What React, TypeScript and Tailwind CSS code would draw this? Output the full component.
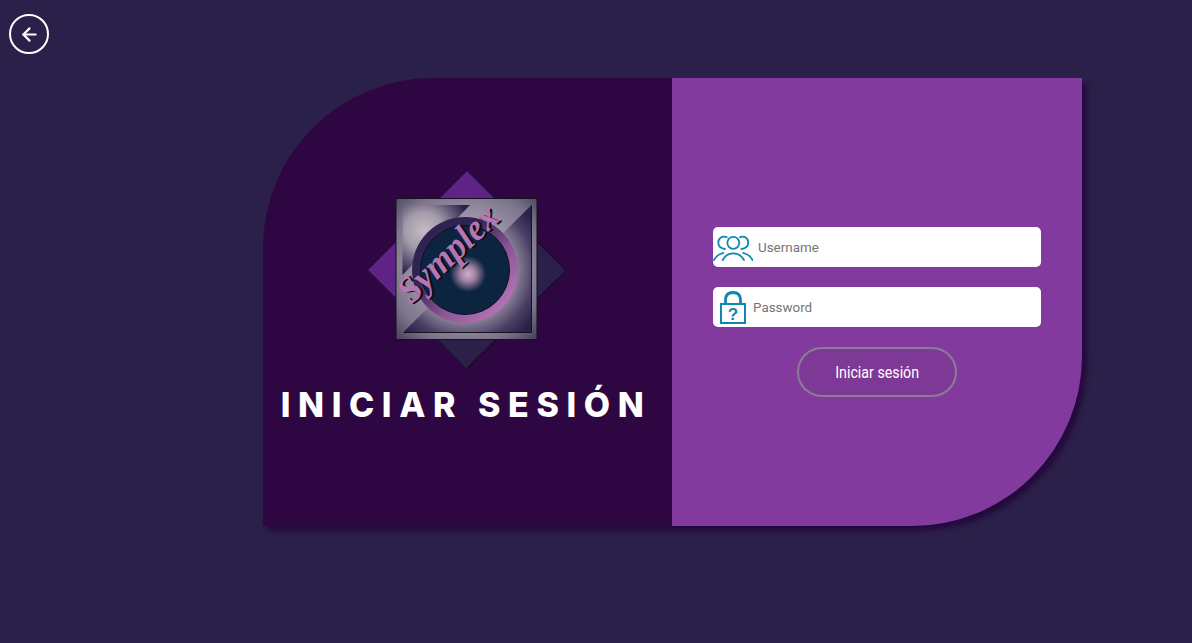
import { ArrowLeft } from 'lucide-react'

function Logo() {
  return (
    <svg width="199" height="199" viewBox="0 0 199 199" className="block overflow-visible">
      <defs>
        <radialGradient id="plate" gradientUnits="userSpaceOnUse" cx="98" cy="95" r="98">
          <stop offset="0.5" stopColor="#9c94a8" />
          <stop offset="0.8" stopColor="#7b7389" />
          <stop offset="1" stopColor="#4f4760" />
        </radialGradient>
        <radialGradient id="glowTop" gradientUnits="userSpaceOnUse" cx="56" cy="60" r="46">
          <stop offset="0" stopColor="#c4bcc4" />
          <stop offset="0.4" stopColor="#a59cac" />
          <stop offset="1" stopColor="#2b2049" />
        </radialGradient>
        <radialGradient id="glowBottom" gradientUnits="userSpaceOnUse" cx="97" cy="99" r="84">
          <stop offset="0.62" stopColor="#8a7f96" />
          <stop offset="0.82" stopColor="#4a4065" />
          <stop offset="1" stopColor="#2b2049" />
        </radialGradient>
        <linearGradient id="ring" x1="0.15" y1="0.15" x2="0.85" y2="0.85">
          <stop offset="0.25" stopColor="#2f2350" />
          <stop offset="0.65" stopColor="#8d5596" />
          <stop offset="1" stopColor="#b172b2" />
        </linearGradient>
        <radialGradient id="spot" gradientUnits="userSpaceOnUse" cx="100" cy="103" r="18">
          <stop offset="0" stopColor="#cfaecb" />
          <stop offset="0.4" stopColor="#a585a8" />
          <stop offset="1" stopColor="#0c2440" />
        </radialGradient>
      </defs>
      <path d="M99 0 198 99.500 98 198 0 99Z" fill="#2b2049" stroke="#120818" strokeWidth="1" />
      <path d="M99 0 148 49 49 148 0 99Z" fill="#5f2387" />
      <rect x="28" y="27.500" width="141" height="141" fill="url(#plate)" stroke="#17101f" strokeWidth="1" />
      <path d="M34.500 34H102L34.500 104Z" fill="url(#glowTop)" />
      <path d="M163.500 34V161H35.500Z" fill="url(#glowBottom)" />
      <path d="M35.500 161.500H163.500V34" fill="none" stroke="#17101f" strokeWidth="1" />
      <circle cx="97" cy="99" r="53" fill="url(#ring)" />
      <circle cx="97" cy="99" r="44.500" fill="#0c2440" stroke="#120e22" strokeWidth="1" />
      <circle cx="100" cy="103" r="18" fill="url(#spot)" />
      <g transform="translate(43 134) rotate(-43.500)" fontFamily="'Liberation Serif', serif" fontStyle="italic" fontWeight="700" fontSize="37">
        <text x="1.500" y="2" fill="#120818" textLength="124" lengthAdjust="spacingAndGlyphs">Symplex</text>
        <text x="0" y="0" fill="#b477b1" textLength="124" lengthAdjust="spacingAndGlyphs">Symplex</text>
      </g>
    </svg>
  )
}

function UsersIcon() {
  return (
    <svg width="40" height="28" viewBox="0 0 40 28" fill="none" stroke="#0f86b0" strokeWidth="1.800" strokeLinecap="round" className="shrink-0">
      <circle cx="20.300" cy="9.800" r="6" />
      <path d="M13.700 4.200C9 2.500 5 5.500 5.300 10 5.500 13.500 8.500 15.500 12 16" />
      <path d="M27 4.200C31.500 2.500 35.500 5.500 35.200 10 35 13.500 32 15.500 28.500 16" />
      <path d="M9.700 27C12 22.500 16 20.300 20.300 20.300S28.500 22.500 31 27" />
      <path d="M1 27C3 23 6 21 10.300 19.800" />
      <path d="M39.500 27C37.500 23 34.500 21 30.300 19.800" />
    </svg>
  )
}

function LockIcon() {
  return (
    <svg width="26" height="33" viewBox="0 0 26 33" fill="none" stroke="#0f86b0" className="shrink-0">
      <path d="M5.500 13V9C5.500 4 8.500 1.500 13 1.500S20.500 4 20.500 9V13" strokeWidth="2.800" />
      <rect x="1" y="13" width="24" height="19" strokeWidth="2" />
      <text x="13" y="29" textAnchor="middle" fontFamily="'Liberation Sans', sans-serif" fontWeight="700" fontSize="17" fill="#0f86b0" stroke="none">?</text>
    </svg>
  )
}

export default function App() {
  return (
    <div className="flex h-[643px] w-[1192px] flex-col items-start overflow-hidden bg-[#2b2049] pl-[9px] pt-[14px] font-['Roboto',sans-serif]">
      <button className="flex size-10 items-center justify-center rounded-full border-2 border-white text-white">
        <ArrowLeft size={21} strokeWidth={2.5} />
      </button>

      <div className="ml-[254px] mt-6 flex h-[448px] w-[819px] rounded-br-[170px] rounded-tl-[170px] shadow-[5px_5px_5px_#240a3d]">
        <div className="flex w-[409px] flex-col items-center rounded-tl-[170px] bg-[#2e0742] pt-[93px]">
          <Logo />
          <h1 className="-ml-[3px] mt-[11px] whitespace-nowrap font-['Inter',sans-serif] text-[34px] font-extrabold leading-[48px] tracking-[7.600px] text-white">
            INICIAR SESIÓN
          </h1>
        </div>

        <div className="flex w-[410px] flex-col items-center gap-5 rounded-br-[170px] bg-[#833a9f] px-[41px] pt-[149px]">
          <label className="flex h-10 w-full items-center rounded-[5px] bg-white">
            <UsersIcon />
            <input
              placeholder="Username"
              className="ml-[5px] mt-[2px] min-w-0 flex-1 bg-transparent text-[13.400px] outline-none placeholder:text-[#757575]"
            />
          </label>
          <label className="flex h-10 w-full items-center rounded-[5px] bg-white pl-[7px]">
            <LockIcon />
            <input
              placeholder="Password"
              type="password"
              className="ml-[7px] mt-[2px] min-w-0 flex-1 bg-transparent text-[13.400px] outline-none placeholder:text-[#757575]"
            />
          </label>
          <button className="flex h-[50px] w-40 items-center justify-center rounded-full border-2 border-[#8b7d92] bg-[#7e3896] pt-px text-white">
            <span className="scale-x-[0.89] whitespace-nowrap text-base">Iniciar sesión</span>
          </button>
        </div>
      </div>
    </div>
  )
}
